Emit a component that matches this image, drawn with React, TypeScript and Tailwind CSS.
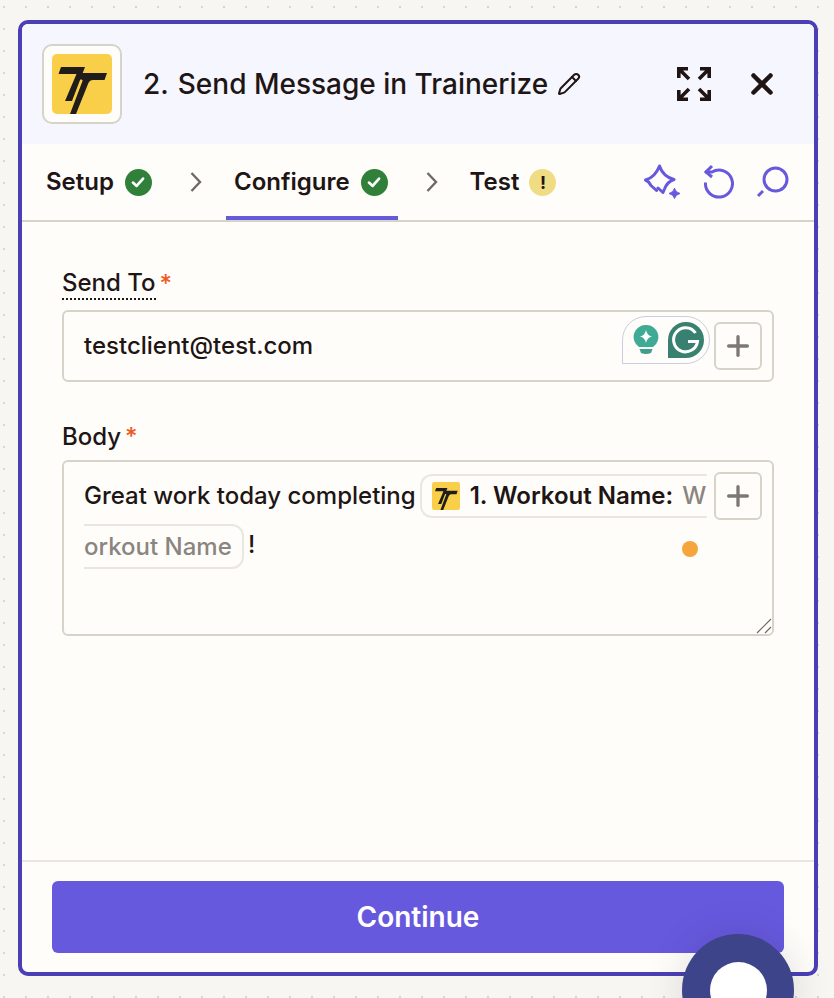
import { Pencil, Plus, X } from 'lucide-react';

function TrainerizeLogo({ className }: { className?: string }) {
  return (
    <svg viewBox="0 0 60 60" className={className}>
      <rect width="60" height="60" rx="5" fill="#f9cf4a" />
      <path d="M9 13H33L20 47H13L24.500 20H6.500Z" fill="#1f1c1a" />
      <path d="M28 19H55L52.500 26H41Q37.500 26 36 30L24 60H18L30.500 27Q31 25.500 29.500 25.500H25.500Z" fill="#1f1c1a" />
    </svg>
  );
}

function StatusCheck() {
  return (
    <span className="flex size-[27px] shrink-0 items-center justify-center rounded-full bg-[#30803a]">
      <svg viewBox="0 0 16 16" className="size-[18px]" fill="none" stroke="#fff" strokeWidth="2.400" strokeLinecap="round" strokeLinejoin="round">
        <path d="M3.500 8.500L6.800 11.500L12.500 5" />
      </svg>
    </span>
  );
}

function StepChevron({ className }: { className?: string }) {
  return (
    <svg viewBox="0 0 12 20" className={className} fill="none" stroke="#6f6a66" strokeWidth="2.400">
      <path d="M1.500 1L10 10L1.500 19" />
    </svg>
  );
}

function ExpandIcon() {
  return (
    <svg viewBox="0 0 34 34" className="size-[34px]" fill="none" stroke="#201515" strokeWidth="3.600">
      <path d="M1.800 11V1.800H11M2 2L12 12" />
      <path d="M23 1.800H32.200V11M32 2L22 12" />
      <path d="M1.800 23V32.200H11M2 32L12 22" />
      <path d="M23 32.200H32.200V23M32 32L22 22" />
    </svg>
  );
}

function SparkleIcon() {
  return (
    <svg viewBox="0 0 38 36" className="h-[36px] w-[38px]" fill="none" stroke="#6759de" strokeWidth="3" strokeLinejoin="round" strokeLinecap="round">
      <path d="M12.500 26.500L7 21.500Q5 17.500 1.500 16Q11 13.500 15.500 2Q19 12.500 30 15.500Q23.500 17.500 20.500 25L19 28.500L14 24" />
      <path d="M30.500 24.500Q31.500 28.500 36 29.500Q31.500 30.500 30.500 34.500Q29.500 30.500 25 29.500Q29.500 28.500 30.500 24.500Z" fill="#6759de" strokeWidth="1" />
    </svg>
  );
}

function UndoIcon() {
  return (
    <svg viewBox="0 0 32 36" className="h-[36px] w-[32px]" fill="none" stroke="#6759de" strokeWidth="3">
      <path d="M3.500 18.500A13.500 13.500 0 1 0 10 8H3" />
      <path d="M10 2L4 8L10 13" />
    </svg>
  );
}

function SearchIcon() {
  return (
    <svg viewBox="0 0 34 34" className="size-[34px]" fill="none" stroke="#6759de" strokeWidth="3">
      <circle cx="19.500" cy="14.500" r="11.500" />
      <path d="M7 26L2 31" />
    </svg>
  );
}

function GrammarlyWidget() {
  return (
    <div className="absolute left-[558px] top-[4px] flex h-[48px] w-[88px] items-center justify-between rounded-[24px] rounded-bl-none border border-[#c9cde3] bg-[#fffdf9] pl-[10px] pr-[5px]">
      <svg viewBox="0 0 26 30" className="h-[30px] w-[26px]">
        <path d="M13 0A12 12 0 0 1 20 22H6A12 12 0 0 1 13 0Z" fill="#3fab94" />
        <path d="M13 5Q14 10.500 19 11.500Q14 12.500 13 18Q12 12.500 7 11.500Q12 10.500 13 5Z" fill="#fff" />
        <path d="M6.500 24H19.500L18 28Q13 30 8 28Z" fill="#3f9f8a" />
      </svg>
      <svg viewBox="0 0 36 36" className="size-[36px]">
        <path d="M18 0A18 18 0 0 1 18 36H0V18A18 18 0 0 1 18 0Z" fill="#38806f" />
        <path d="M27.500 11A12 12 0 1 0 29.500 19.500H20" fill="none" stroke="#fff" strokeWidth="3" />
      </svg>
    </div>
  );
}

function AddButton() {
  return (
    <button className="flex size-[48px] items-center justify-center rounded-[6px] border-2 border-[#d6d4c9] bg-[#fffdf9]">
      <Plus className="size-[32px] text-[#7d7874]" strokeWidth={2.500} />
    </button>
  );
}

export default function App() {
  return (
    <div className="relative h-[998px] w-[834px] overflow-hidden bg-[#f7f6f3] bg-[radial-gradient(circle,#d8d6cd_1px,transparent_1.5px)] bg-[size:22px_22px] bg-[position:-7px_-4px] pl-[18px] pt-[20px] font-['Inter',sans-serif] text-[#201515]">
      <div className="flex h-[956px] w-[800px] flex-col overflow-hidden rounded-[10px] border-4 border-[#4b3fb5] bg-[#fffdf9]">
        <header className="flex h-[120px] shrink-0 items-center bg-[#f6f6fe] pl-[20px] pr-[35px]">
          <div className="flex size-[80px] items-center justify-center rounded-[10px] border-2 border-[#d6d4c9] bg-[#fffdf9]">
            <TrainerizeLogo className="size-[60px]" />
          </div>
          <h1 className="ml-[21px] whitespace-nowrap text-[28px] font-medium leading-none">
            2.<span className="ml-[9px]">Send Message in Trainerize</span>
          </h1>
          <Pencil className="ml-[9px] size-[24px]" strokeWidth={2} />
          <div className="ml-auto flex items-center gap-[34px]">
            <ExpandIcon />
            <X className="size-[34px]" strokeWidth={3.200} />
          </div>
        </header>

        <nav className="flex h-[78px] shrink-0 items-center border-b-2 border-[#d6d4c9] pl-[24px] pr-[24px] text-[24px] font-semibold">
          <span>Setup</span>
          <span className="ml-[11px]"><StatusCheck /></span>
          <StepChevron className="ml-[38px] h-[20px] w-[12px]" />
          <div className="relative ml-[32px] flex h-full items-center">
            <span>Configure</span>
            <span className="ml-[11px]"><StatusCheck /></span>
            <span className="absolute -left-[8px] bottom-0 h-[4px] w-[172px] bg-[#6759de]" />
          </div>
          <StepChevron className="ml-[38px] h-[20px] w-[12px]" />
          <span className="ml-[32px]">Test</span>
          <span className="ml-[10px] flex size-[27px] items-center justify-center rounded-full bg-[#f0dc84] text-[18px] font-bold">!</span>
          <div className="ml-auto flex items-center">
            <SparkleIcon />
            <span className="ml-[20px]"><UndoIcon /></span>
            <span className="ml-[22px]"><SearchIcon /></span>
          </div>
        </nav>

        <main className="flex-1 px-[40px] pt-[46px]">
          <label className="flex h-[34px] items-start text-[24px] font-medium leading-[32px]">
            <span className="h-[32px] border-b-2 border-dotted border-[#201515] leading-[29px]">Send To</span>
            <span className="ml-[4px] text-[#ef5a1f]">*</span>
          </label>
          <div className="relative mt-[8px] flex h-[72px] items-center rounded-[6px] border-2 border-[#d6d4c9] pl-[20px] text-[24px] font-medium">
            <span>testclient@test.com</span>
            <GrammarlyWidget />
            <div className="absolute right-[10px] top-[10px]"><AddButton /></div>
          </div>

          <label className="mt-[39px] flex h-[32px] items-center text-[24px] font-medium">
            <span>Body</span>
            <span className="ml-[4px] text-[#ef5a1f]">*</span>
          </label>
          <div className="relative mt-[7px] h-[176px] rounded-[6px] border-2 border-[#d6d4c9] pl-[20px] pt-[12px] text-[24px] font-medium">
            <div className="flex h-[44px] items-center">
              <span className="whitespace-nowrap">Great work today completing</span>
              <div className="ml-[4px] flex h-[44px] w-[287px] shrink-0 items-center overflow-hidden whitespace-nowrap rounded-l-[12px] border-y-2 border-l-2 border-[#e9e7e0] pl-[10px]">
                <TrainerizeLogo className="size-[28px] shrink-0" />
                <span className="ml-[10px] font-semibold">1. Workout Name:</span>
                <span className="ml-[9px] font-medium text-[#8a8580]">W</span>
              </div>
            </div>
            <div className="mt-[6px] flex h-[45px] items-center">
              <div className="flex h-[45px] w-[160px] items-center rounded-r-[12px] border-y-2 border-r-2 border-[#e9e7e0] font-medium text-[#8a8580]">orkout Name</div>
              <span className="ml-[4px] -translate-y-[2px]">!</span>
            </div>
            <div className="absolute right-[10px] top-[10px]"><AddButton /></div>
            <span className="absolute left-[618px] top-[79px] size-[16px] rounded-full bg-[#f5a53c]" />
            <svg viewBox="0 0 16 16" className="absolute bottom-0 right-0 size-[16px]" fill="none" stroke="#6f6a66" strokeWidth="1.200">
              <path d="M1 15L15 1M9 15L15 9" />
            </svg>
          </div>
        </main>

        <footer className="shrink-0 border-t-2 border-[#e9e7e0] px-[30px] pb-[19px] pt-[19px]">
          <button className="flex h-[72px] w-full items-center justify-center rounded-[6px] bg-[#6759de] text-[28px] font-semibold text-white">Continue</button>
        </footer>
      </div>

      <div className="absolute left-[682px] top-[934px] flex size-[112px] items-center justify-center rounded-full bg-[#3d4489] shadow-[0_0_40px_rgba(0,0,0,0.12)]">
        <span className="size-[57px] rounded-full bg-white" />
      </div>
    </div>
  );
}
